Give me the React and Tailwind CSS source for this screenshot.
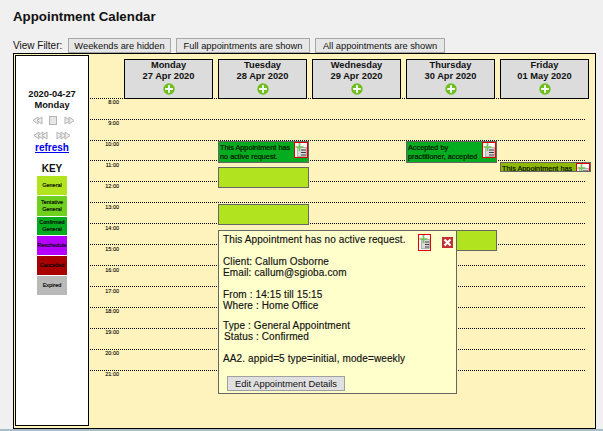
const hours = [
  ["8:00", "h-[21px]", ""], ["9:00", "h-[21px]", ""], ["10:00", "h-[20px]", ""], ["11:00", "h-[21px]", "pt-px"],
  ["12:00", "h-[21px]", "pt-px"], ["13:00", "h-[21px]", "pt-px"], ["14:00", "h-[21px]", "pt-px"], ["15:00", "h-[21px]", "pt-px"],
  ["16:00", "h-[21px]", "pt-px"], ["17:00", "h-[21px]", "pt-px"], ["18:00", "h-[21px]", ""], ["19:00", "h-[21px]", ""],
  ["20:00", "h-[21px]", ""], ["21:00", "h-[21px]", ""],
];
const days = [
  ["Monday", "27 Apr 2020"], ["Tuesday", "28 Apr 2020"], ["Wednesday", "29 Apr 2020"],
  ["Thursday", "30 Apr 2020"], ["Friday", "01 May 2020"],
];
const keys = [
  ["General", "bg-[#b2e31f]", "h-[19px]"], ["Tentative General", "bg-[#6fd01f]", "h-[20px]"],
  ["Confirmed General", "bg-[#05ac20]", "h-[18px]"], ["Reschedule", "bg-[#b600ff]", "h-[19px]"],
  ["Cancelled", "bg-[#a80000]", "h-[19px]"], ["Expired", "bg-[#b9b9b9]", "h-[19px]"],
];

function Plus() {
  return (
    <svg width="12" height="12" viewBox="0 0 12 12" className="block">
      <circle cx="6" cy="6" r="5.7" fill="#6cbf1c" />
      <path d="M6 2.2V9.8M2.2 6H9.8" stroke="#fff" strokeWidth="2" />
    </svg>
  );
}

function Nav({ dir, n }) {
  const w = n * 4 + 3;
  const tris = Array.from({ length: n }, (_, i) => {
    const x = i * 4 + 1;
    return dir === "l"
      ? `M${x + 5} 1L${x} 4.5L${x + 5} 8Z`
      : `M${x} 1L${x + 5} 4.5L${x} 8Z`;
  });
  return (
    <svg width={w} height="9" viewBox={`0 0 ${w} 9`} className="block">
      {tris.map((d) => (
        <path key={d} d={d} fill="#eeeeee" stroke="#b4b4b4" />
      ))}
    </svg>
  );
}

function Stop() {
  return (
    <svg width="8" height="9" viewBox="0 0 8 9" className="block">
      <rect x="0.5" y="0.5" width="7" height="8" fill="#e6e6e6" stroke="#b4b4b4" />
    </svg>
  );
}

function DocIcon({ w = 12, h = 14 }) {
  return (
    <svg width={w} height={h} viewBox={`0 0 ${w} ${h}`} className="block">
      <rect width={w} height={h} fill="#f8f8f8" />
      <rect x="2.5" y="4.5" width={w - 3} height="9" fill="#d9d9d9" stroke="#9a9a9a" strokeWidth="0.7" />
      <path d={`M6 7H${w - 1}M6 9.5H${w - 1}M6 12H${w - 1}`} stroke="#3c3c3c" strokeWidth="1" />
      <path d="M4.5 0V8M0.5 4H8.5" stroke="#72c455" strokeWidth="1.6" />
    </svg>
  );
}

function Appt({ pos, text, bg = "bg-[#05ac20]" }) {
  return (
    <div className={`absolute flex justify-between overflow-hidden border border-[#666] text-[7.3px] leading-[9px] whitespace-nowrap text-[#051000] [-webkit-text-stroke:0.2px_#051000] ${bg} ${pos}`}>
      <div className="pl-px pt-px">{text}</div>
      <div className="h-[16px] shrink-0 border border-[#e00000]">
        <DocIcon />
      </div>
    </div>
  );
}

export default function App() {
  return (
    <div className="flex h-[431px] w-[603px] flex-col overflow-hidden bg-[#f0f0f0] font-['Liberation_Sans',Arial,sans-serif] text-[#111]">
      <h1 className="h-[38px] pl-[13px] pt-[8px] text-[13.3px] font-bold leading-[17px]">Appointment Calendar</h1>
      <div className="flex h-[15px] items-center pl-[13px] text-[10px] leading-[12px]">
        <span className="mr-[5px] w-[50px] whitespace-nowrap">View Filter:</span>
        {[["Weekends are hidden", "w-[103px]"], ["Full appointments are shown", "w-[134px]"], ["All appointments are shown", "w-[130px]"]].map(([t, w]) => (
          <button key={t} className={`mr-[5px] h-[15px] whitespace-nowrap border border-[#a8a8a8] bg-[#e6e6e6] text-center text-[9.3px] leading-[12px] text-[#111] ${w}`}>{t}</button>
        ))}
      </div>
      <div className="ml-[13px] flex h-[376px] w-[583px] border border-black bg-[#fff3bd] p-px">
        <aside className="flex h-[371px] w-[74px] shrink-0 flex-col items-center border border-black bg-white">
          <div className="mt-[33px] text-center text-[9.3px] font-bold leading-[11px]">2020-04-27<br />Monday</div>
          <div className="ml-[2px] mt-[4px] flex h-[10px] items-center"><Nav dir="l" n={2} /><span className="w-[6px]" /><Stop /><span className="w-[7px]" /><Nav dir="r" n={2} /></div>
          <div className="mt-[5px] flex h-[10px] items-center gap-[8px]"><Nav dir="l" n={3} /><Nav dir="r" n={3} /></div>
          <a href="#" className="mt-[2px] text-[10px] font-bold leading-[12px] text-[#0000ee] underline">refresh</a>
          <div className="mt-[9px] text-[10px] font-bold leading-[12px]">KEY</div>
          <div className="mt-[1px] flex w-[30px] flex-col gap-px">
            {keys.map(([t, c, h]) => (
              <div key={t} className={`flex items-center justify-center text-center text-[5.5px] leading-[7px] text-black [-webkit-text-stroke:0.15px_#000] ${c} ${h}`}>{t}</div>
            ))}
          </div>
        </aside>
        <main className="relative flex-1 pl-px pt-1">
          <div className="relative z-10 -mb-px flex h-10 gap-[5px] pl-[34px]">
            {days.map(([d, dt]) => (
              <div key={d} className="flex w-[89px] flex-col items-center border border-black bg-[#dcdcdc] text-[9.3px] font-bold leading-[11px]">
                <div>{d}</div>
                <div>{dt}</div>
                <div className="mt-px"><Plus /></div>
              </div>
            ))}
          </div>
          <div className="w-[495px]">
            {hours.map(([t, h, p]) => (
              <div key={t} className={`border-t border-dotted border-black text-right ${h}`}>
                <div className={`mr-[466px] text-[5.5px] leading-[7px] text-black [-webkit-text-stroke:0.1px_#000] ${p}`}>{t}</div>
              </div>
            ))}
          </div>

          <Appt pos="left-[129px] top-[86px] h-[22px] w-[91px]" text={<>This Appointment has<br />no active request.</>} />
          <Appt pos="left-[317px] top-[86px] h-[22px] w-[91px]" text={<>Accepted by<br />practitioner, accepted</>} />
          <Appt pos="left-[411px] top-[107px] h-[10px] w-[91px]" bg="bg-[#8fb800]" text="This Appointment has" />
          <div className="absolute left-[129px] top-[112px] h-[21px] w-[91px] border border-[#666] bg-[#b2e31f]" />
          <div className="absolute left-[129px] top-[149px] h-[21px] w-[91px] border border-[#666] bg-[#b2e31f]" />
          <div className="absolute left-[317px] top-[175px] h-[21px] w-[91px] border border-[#666] bg-[#b2e31f]" />

          <section className="absolute left-[129px] top-[175px] z-20 h-[164px] w-[239px] border border-[#666] bg-[#ffffcc] pl-1 pt-[3px] text-[10px] leading-[11px] tracking-[0.12px] text-[#111] [-webkit-text-stroke:0.15px_#111]">
            <div>This Appointment has no active request.</div>
            <div className="mt-[11px]">Client: Callum Osborne</div>
            <div>Email: callum@sgioba.com</div>
            <div className="mt-[11px]">From : 14:15 till 15:15</div>
            <div>Where : Home Office</div>
            <div className="mt-[9px]">Type : General Appointment</div>
            <div className="pl-px">Status : Confirmed</div>
            <div className="mt-[11px]">AA2. appid=5 type=initial, mode=weekly</div>
            <button className="ml-[4px] mt-[12px] block h-[15px] w-[118px] border border-[#a0a0a0] bg-[#e0e0e0] text-center text-[9.4px] leading-[12px] tracking-normal text-[#111] [-webkit-text-stroke:0]">Edit Appointment Details</button>
            <div className="absolute left-[199px] top-[3px] h-[17px] border border-[#e00000] bg-white"><DocIcon w={11} h={15} /></div>
            <svg width="11" height="11" viewBox="0 0 11 11" className="absolute left-[223px] top-[6px]">
              <rect width="11" height="11" fill="#c62f2f" />
              <path d="M2.5 2.5L8.5 8.5M8.5 2.5L2.5 8.5" stroke="#fff" strokeWidth="2.2" />
            </svg>
          </section>
        </main>
      </div>
      <div className="flex-1 bg-[#a9bcca]" />
    </div>
  );
}
